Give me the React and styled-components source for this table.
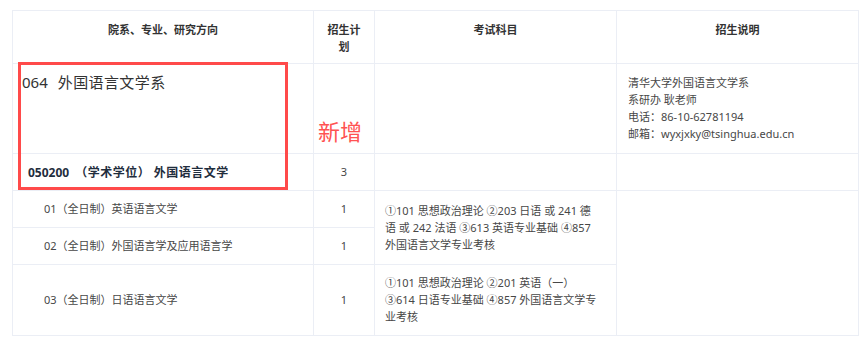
import React from "react";
import styled, { createGlobalStyle } from "styled-components";

const GlobalStyle = createGlobalStyle`
body {
  margin: 0;
  background: #fff;
  font-family: "Noto Sans", "Noto Sans CJK SC", sans-serif;
}
`

const Page = styled.div`
padding: 10px 9px 10px 12px;
`
const Frame = styled.div`
position: relative;
width: 846px;
`
const Table = styled.table`
width: 100%;
table-layout: fixed;
border-collapse: collapse;
font-size: 11px;
line-height: 17px;
color: #474747;
td, th {
  border: 1px solid #ebeef5;
}
`
const Th = styled.th`
padding: 10px 10px 8px;
font-weight: 700;
color: #333;
text-align: center;
vertical-align: top;
`
const Cell = styled.td`
padding: 9px 10px 10px;
vertical-align: ${props => props.$top ? 'top' : 'middle'};
text-align: ${props => props.$center ? 'center' : 'left'};
`
const DeptCell = styled(Cell)`
padding: 7px 9px;
font-size: 15px;
line-height: 22px;
color: #333;
`
const DeptName = styled.span`
margin-left: 10px;
letter-spacing: 0.4px;
`
const MajorCell = styled(Cell)`
padding: 9px 15px;
font-size: 12px;
font-weight: 700;
color: #1f2d3d;
`
const MajorName = styled.span`
margin-left: 6px;
letter-spacing: 0.5px;
`
const DirCell = styled(Cell)`
padding-left: 31px;
`
const InfoCell = styled(Cell)`
padding: 10px 11px 11px;
`
const Line = styled.span`
display: block;
white-space: nowrap;
`
const Highlight = styled.div`
position: absolute;
left: 6px;
top: 52px;
width: 270px;
height: 128px;
box-sizing: border-box;
border: 3px solid #ff4a4a;
pointer-events: none;
`
const NewTag = styled.div`
position: absolute;
left: 306px;
top: 107px;
font-size: 22px;
line-height: 28px;
color: #ff5252;
`

const exams = {
  a: [
    "①101 思想政治理论 ②203 日语 或 241 德",
    "语 或 242 法语 ③613 英语专业基础 ④857",
    "外国语言文学专业考核",
  ],
  b: [
    "①101 思想政治理论 ②201 英语（一）",
    "③614 日语专业基础 ④857 外国语言文学专",
    "业考核",
  ],
};

const info = [
  "清华大学外国语言文学系",
  "系研办 耿老师",
  "电话：86-10-62781194",
  "邮箱：wyxjxky@tsinghua.edu.cn",
];

const App = () => {
  return (
    <>
      <GlobalStyle />
      <Page>
        <Frame>
          <Table>
            <colgroup>
              <col style={{ width: 301 }} />
              <col style={{ width: 61 }} />
              <col style={{ width: 242 }} />
              <col style={{ width: 242 }} />
            </colgroup>
            <thead>
              <tr>
                <Th>院系、专业、研究方向</Th>
                <Th>招生计划</Th>
                <Th>考试科目</Th>
                <Th>招生说明</Th>
              </tr>
            </thead>
            <tbody>
              <tr>
                <DeptCell $top>064<DeptName>外国语言文学系</DeptName></DeptCell>
                <Cell />
                <Cell />
                <InfoCell $top>
                  {info.map(t => <Line key={t}>{t}</Line>)}
                </InfoCell>
              </tr>
              <tr>
                <MajorCell>050200<MajorName>（学术学位） 外国语言文学</MajorName></MajorCell>
                <Cell $center>3</Cell>
                <Cell />
                <Cell />
              </tr>
              <tr>
                <DirCell>01（全日制）英语语言文学</DirCell>
                <Cell $center>1</Cell>
                <Cell rowSpan={2}>
                  {exams.a.map(t => <Line key={t}>{t}</Line>)}
                </Cell>
                <Cell rowSpan={3} />
              </tr>
              <tr>
                <DirCell>02（全日制）外国语言学及应用语言学</DirCell>
                <Cell $center>1</Cell>
              </tr>
              <tr>
                <DirCell>03（全日制）日语语言文学</DirCell>
                <Cell $center>1</Cell>
                <Cell>
                  {exams.b.map(t => <Line key={t}>{t}</Line>)}
                </Cell>
              </tr>
            </tbody>
          </Table>
          <Highlight />
          <NewTag>新增</NewTag>
        </Frame>
      </Page>
    </>
  )
};

export default App;
